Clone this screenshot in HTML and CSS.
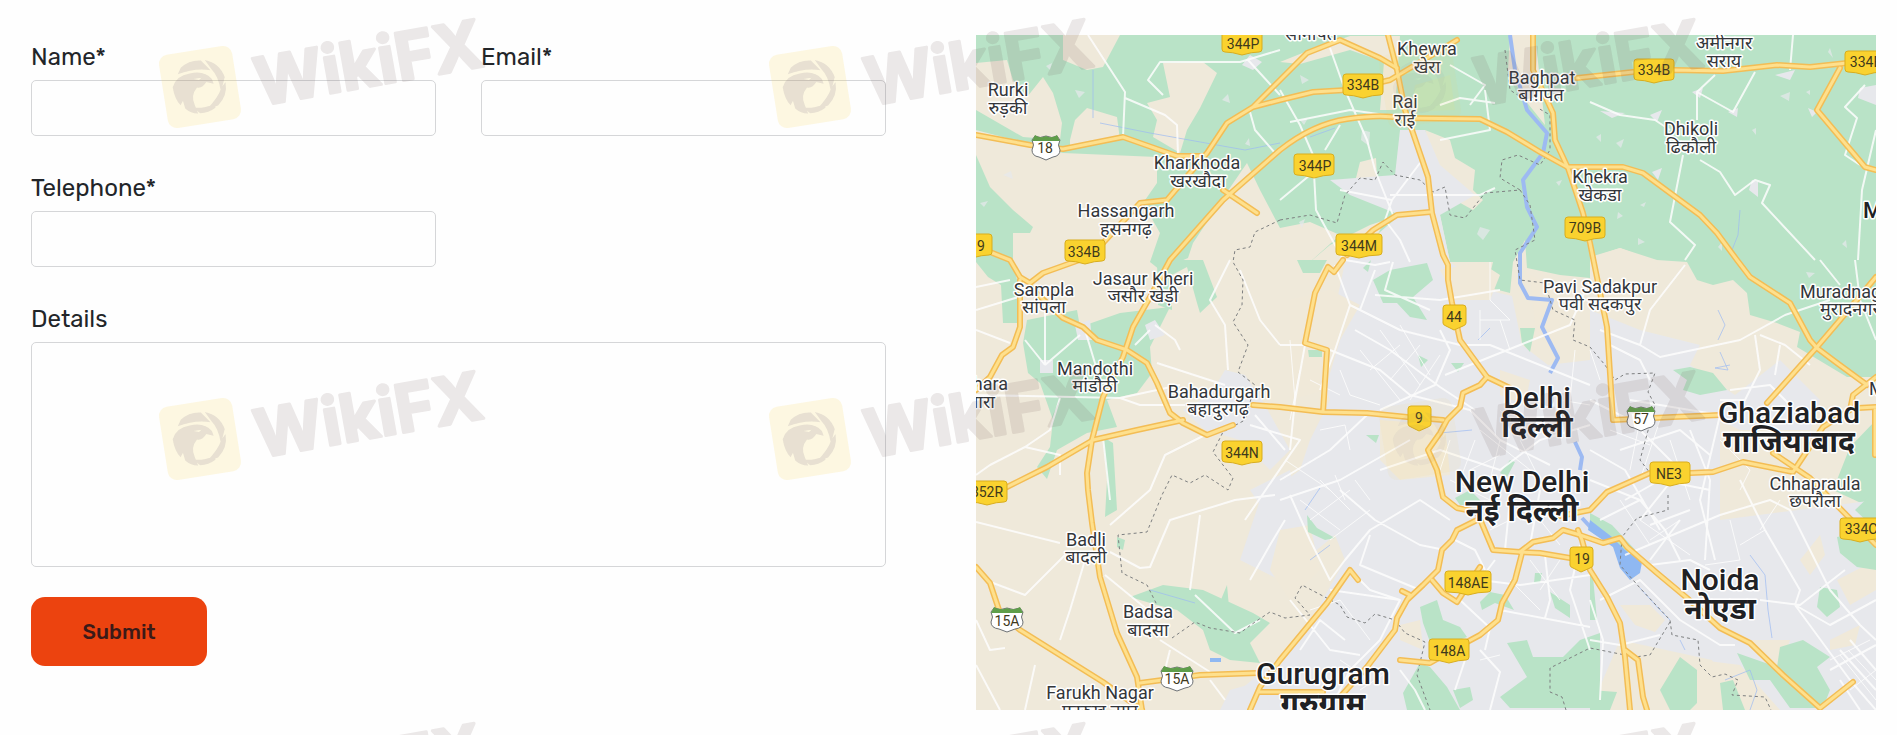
FILE: index.html
```html
<!DOCTYPE html>
<html lang="en">
<head>
  <meta charset="UTF-8">
  <meta name="viewport" content="width=device-width, initial-scale=1.0">
  <title>Contact</title>
  <link rel="stylesheet" href="styles.css">
</head>
<body>
  <main class="contact">
    <form class="contact-form">
      <div class="field">
        <label for="name">Name*</label>
        <input type="text" id="name" name="name" required>
      </div>
      <div class="field">
        <label for="email">Email*</label>
        <input type="email" id="email" name="email" required>
      </div>
      <div class="field">
        <label for="telephone">Telephone*</label>
        <input type="tel" id="telephone" name="telephone" required>
      </div>
      <div class="field field-wide">
        <label for="details">Details</label>
        <textarea id="details" name="details"></textarea>
      </div>
      <button type="submit" class="submit">Submit</button>
    </form>

    <svg class="map" viewBox="976 35 900 675" role="img" aria-label="Map of Delhi">
      <defs>
        <path id="sign" d="M3 0H37Q40 0 40 3V18Q40 21 37 21Q30 21 20 24Q10 21 3 21Q0 21 0 18V3Q0 0 3 0Z"/>
        <path id="sign-wide" d="M3 0H43Q46 0 46 3V18Q46 21 43 21Q33 21 23 24Q13 21 3 21Q0 21 0 18V3Q0 0 3 0Z"/>
        <path id="badge" d="M3 0H20Q23 0 23 3V18Q23 20 20 21L11 25L3 21Q0 20 0 18V3Q0 0 3 0Z"/>
        <g id="shield">
          <path class="shield-body" d="M3 1Q8 4 14 1Q20 4 25 1L28 5Q25 10 28 15Q28 21 21 22L14 25L7 22Q0 21 0 15Q3 10 0 5Z"/>
          <path class="shield-top" d="M3 0Q8 4 14 1Q20 4 25 0L28 6H0Z"/>
        </g>
        <g id="shield-wide">
          <path class="shield-body" d="M3 1Q10 4 16 1Q22 4 29 1L32 5Q29 10 32 15Q32 21 24 22L16 25L8 22Q0 21 0 15Q3 10 0 5Z"/>
          <path class="shield-top" d="M3 0Q10 4 16 1Q22 4 29 0L32 6H0Z"/>
        </g>

        <!-- highways, drawn twice: casing and fill -->
        <g id="highways">
          <path d="M1142 710L1137 677L1117 633L1100 577L1092 523L1088 490L1087 473L1092 440L1103 397L1123 357L1133 327L1150 297L1170 260L1223 200L1280 150Q1313 124 1347 119T1400 118L1480 119L1507 132L1540 152L1567 167L1623 167L1643 173L1700 215L1717 233L1737 260L1750 277L1790 303L1810 340L1817 348L1837 363L1867 385"/>
          <path d="M1388 35L1397 70L1405 110L1413 133L1428 177L1432 213L1443 255L1448 265V280L1452 303L1460 340L1487 377L1510 388"/>
          <path d="M1487 377L1480 385L1463 393L1460 407L1447 420L1440 433L1428 450L1437 470L1443 497L1457 508L1477 512L1493 550L1520 552L1540 553L1570 558H1590"/>
          <path d="M1477 520L1457 530L1452 540L1442 550L1438 570L1423 585L1407 600L1397 618L1395 630L1367 667L1340 697M1402 591L1410 595L1407 600"/>
          <path d="M1432 580L1443 593L1457 602L1480 567M1522 553L1515 580L1502 603L1498 620L1480 635L1467 642L1430 663L1400 660"/>
          <path d="M1520 552L1533 542L1553 538L1563 530L1580 535L1603 543L1620 538L1627 547L1657 573L1687 598L1720 628L1750 643L1783 675L1820 708L1853 682"/>
          <path d="M1578 530L1582 540L1590 570L1607 597L1620 623L1625 657L1630 710M1625 650L1638 660L1643 697L1647 710"/>
          <path d="M1560 516L1590 510L1607 492L1650 473H1690L1713 472L1743 462L1793 472L1823 427L1850 410L1853 395L1876 377M1773 453L1810 478L1876 545"/>
          <path d="M1767 403L1817 347L1840 320L1876 277M1858 408L1876 407M1875 410V455"/>
          <path d="M1533 35V70L1553 113L1555 140L1568 168L1583 213L1590 243L1607 327L1613 420L1673 417L1720 415"/>
          <path d="M1253 405L1280 407L1323 412L1367 413L1407 417L1443 420M1343 260L1334 272L1328 267L1315 293L1305 343L1327 350L1323 412M1347 255L1373 230L1397 215L1430 212"/>
          <path d="M1103 243L1140 203L1167 200L1207 153L1227 123L1253 107L1280 80L1307 53L1340 40L1380 58L1397 68M1253 107L1280 100L1313 92L1347 90L1390 80L1457 40"/>
          <path d="M976 135L1030 145L1063 149L1123 137L1177 156H1203M1223 190L1257 213"/>
          <path d="M985 250L1010 260L1020 277L1030 283L1043 273L1085 258M1020 280V327L1013 347L1002 355L990 377L976 390M1030 287L1063 318L1083 327L1097 340L1127 350L1147 363L1157 383L1170 413L1183 423L1207 435L1233 425"/>
          <path d="M976 495L1007 487L1047 467L1093 440L1137 430L1183 420M976 567L990 583L1000 613L1020 630L1103 682L1142 710M1140 683L1200 675L1257 673"/>
          <path d="M1250 710L1260 687L1280 660L1327 603L1350 570L1358 580M1260 692H1323"/>
          <path d="M1577 78L1633 72L1673 70L1723 71L1777 65L1810 67L1847 63M1840 68L1817 110L1865 167L1876 170"/>
        </g>
      </defs>

      <rect class="land" x="976" y="35" width="900" height="675"/>

      <!-- fields -->
      <path class="green" d="M976 35H1876V377H1847L1797 347L1800 332L1777 323L1750 315L1747 293L1733 280L1713 285L1697 280L1687 262L1657 260L1620 248L1590 257V278L1560 275L1527 268L1525 240L1513 262L1510 293L1487 287L1493 262L1450 262L1440 215L1400 215L1375 240L1360 262H1310L1340 235L1310 222L1280 228L1260 190L1247 163L1225 195L1193 243L1188 258L1160 270L1150 262L1160 233L1143 203L1157 183V157L1063 153L976 130Z"/>
      <path class="green" d="M976 155L990 187L1013 210L1033 227L1030 233H1013V260L1017 280L1020 323H1003L1001 285L988 277L976 262ZM1027 320L1077 310L1080 327L1120 313L1170 307L1157 333L1150 347L1152 373L1137 393L1107 400L1117 427L1087 433L1057 450L1047 479L1037 467L1050 447L1053 420L1040 383L1028 373L1023 343ZM1103 437L1113 443L1117 510L1105 517L1107 480ZM1157 260H1203L1217 297L1200 313L1197 303L1187 267L1172 275V310L1158 305Z"/>
      <path class="green" d="M1130 597L1163 585L1203 590L1253 613L1270 623L1250 643L1260 663L1230 660L1210 650L1203 630L1177 610L1157 605ZM1218 607L1227 585L1229 607L1225 620ZM1117 537L1125 540L1123 550L1117 547ZM1876 420L1850 447L1833 490L1876 510Z"/>

      <path class="land" d="M1023 137L976 110V63L1007 60L1013 80L1027 97L1043 77L1053 93L1062 123L1060 140ZM1063 35H1120L1103 67L1087 70L1063 60ZM1163 63L1203 62L1217 73L1200 108L1187 130L1180 153L1153 137L1157 120L1147 103L1170 97ZM1070 140L1075 120L1087 108L1117 117L1120 140L1070 147ZM1280 62L1310 50L1350 36H1400L1395 110H1380L1384 62L1350 50L1300 64ZM1510 35H1535L1545 125L1525 100L1508 70Z"/>
      <path class="land" d="M1360 162L1376 158L1377 178L1355 182ZM1425 130L1450 140L1455 158L1475 170L1473 190L1483 200L1473 210L1455 200L1440 185ZM1590 258L1620 248L1657 262L1660 290H1590ZM1330 245L1370 225L1385 220L1375 240L1350 262H1310Z"/>

      <!-- built-up areas -->
      <path class="urban" d="M1400 130L1425 130L1440 165L1475 195L1440 215L1450 262L1487 290L1512 296L1522 345L1548 365L1590 360L1590 310L1640 330L1700 345L1690 365L1735 395L1780 360L1820 400L1810 430H1720V520L1876 500V710H1735L1712 660L1620 640L1590 710H1260L1240 690L1300 640L1345 560L1335 535L1280 580L1240 560L1260 500L1300 470L1310 440L1330 400L1310 350L1335 310L1345 262L1400 215L1350 195L1330 180L1395 175Z"/>
      <path class="urban" d="M1183 410L1210 395L1225 370L1245 375L1262 400L1290 450L1270 470L1240 440L1205 430ZM1145 325L1155 320L1165 335L1150 340ZM1250 490L1290 470L1300 520L1270 520ZM1075 325L1090 320L1092 340H1078ZM1040 360H1053V373H1040ZM1230 690L1265 680L1270 710H1220ZM1250 55L1262 62L1253 70L1242 65ZM1860 88L1876 85V105L1858 98ZM1775 75L1795 70L1790 80ZM1600 111L1625 113L1612 118ZM1650 115L1662 110L1657 122ZM1692 92L1703 88L1700 98ZM1728 112L1738 108L1737 117ZM1752 180L1758 182V197L1749 190ZM1652 172L1662 168L1658 180ZM1808 108L1817 112L1812 117Z"/>
      <path class="speck" d="M1616 143l8-4-3 9zM1596 137l5-3v8zM1780 96l10-4-1 9zM1638 238l7 4-7 3zM1752 130l4-2v7zM1806 92l4-2v5zM1830 48l3 10-5-6zM1842 244l4-4 1 8zM1618 212l5 4-6 3zM1640 205l6-3-2 5zM1718 247l4-5v9zM1300 75l9 5-7 4zM1222 100l6-6 2 9zM1075 90l10 2-6 6zM1046 66l6-3-2 7zM1245 144l4-6 1 8zM1556 182l6-2-3 6zM1480 227l10 3-7 10-6-6zM1300 120l8-2-4 7zM1362 130l8 2-1 14-8-6zM1299 222l6-3-3 9zM980 203l8-2-4 6zM1003 175l8-4 2 8zM1815 273l-6 5-3-6z"/>
      <path class="sand" d="M1290 300L1330 290L1360 305L1340 340L1325 390L1290 400ZM1500 370L1530 380L1525 405L1500 395ZM1380 420L1445 425L1450 475L1400 480L1380 460ZM1620 605L1650 605L1665 620L1655 632L1635 625ZM1800 560L1820 535L1825 555L1810 575ZM1837 580L1876 560V590L1850 605ZM1830 640L1860 625L1855 645L1830 650ZM1400 625L1420 620L1423 650L1400 640ZM1700 660L1740 665L1780 710H1690ZM1750 640L1790 640L1780 670ZM1720 420L1760 440L1790 430L1780 455L1720 460ZM1530 275L1550 285L1565 310L1550 350L1535 325ZM1440 270L1480 262L1500 275L1490 300H1455ZM1280 530L1310 525L1320 570L1290 600L1270 570Z"/>

      <!-- parks -->
      <path class="green" d="M1507 643L1527 640L1533 657H1563L1580 640L1600 633V708H1510L1500 697L1527 677ZM1420 607L1437 600L1443 620L1460 627L1467 637L1433 650L1423 623ZM1420 663L1430 667L1447 687L1460 710H1407L1403 693ZM1453 690L1470 687L1473 700L1460 708ZM1660 690L1680 657L1697 670V703L1690 710H1670ZM1737 653L1777 667L1780 647L1803 640L1830 657L1817 667L1830 690L1823 708H1790L1770 680H1750ZM1720 683L1733 680L1745 710H1723ZM1590 690L1617 692L1610 710H1590ZM1837 537L1876 530V570L1857 567L1840 553ZM1820 587L1837 590L1840 607L1827 617L1817 607ZM1855 510L1876 490V530Z"/>
      <path class="green" d="M1673 370L1690 367L1713 373L1727 390L1700 395L1683 390L1687 380ZM1373 280L1390 270L1427 263L1433 280L1413 297L1427 320L1410 317L1397 303H1383ZM1297 260H1327L1320 273H1303ZM1520 328H1535L1530 352L1522 343ZM1308 350H1322V357H1309ZM1418 355L1428 360L1421 367ZM1451 363H1464L1458 372ZM1366 435H1379L1376 443ZM1510 460L1515 462L1507 477L1500 473ZM1480 602L1490 592L1505 595L1514 610L1495 603L1482 610ZM1535 573H1542L1540 583H1534ZM1550 592L1570 605V618L1555 608ZM1307 515L1317 528L1335 538L1325 540L1308 532ZM1590 513L1612 525L1640 555L1635 570L1612 545L1590 530ZM1455 498L1470 490L1485 505H1460ZM1590 545L1597 620H1590ZM1363 268L1371 260L1368 272Z"/>
      <path class="farm" d="M1415 85L1450 75L1455 110L1410 112Z"/>

      <!-- water -->
      <path class="river" d="M1510 35L1515 70L1527 110L1547 133L1543 153L1523 180L1527 207L1537 227L1520 253L1520 283L1528 298L1552 300L1542 327L1558 358L1550 373M1575 442L1582 457L1580 470M1582 518L1595 532L1610 540"/>
      <path class="lake" d="M1590 520L1612 537L1625 550L1642 562L1640 573L1630 580L1620 568L1613 547L1588 530ZM1210 658h11v4h-11z"/>
      <path class="stream" d="M1093 70V118M1100 123L1150 133L1245 150L1280 143M1310 137L1335 128M1478 340L1490 328M1720 352L1728 370L1715 368L1730 365M1718 310L1725 325L1718 340M1740 210L1738 235L1732 250M1640 588L1660 610L1670 620M1680 640L1685 650M1725 680L1750 670L1757 690L1750 710M1750 555L1765 575L1768 610L1772 638M1150 590L1195 603M1305 510L1320 488M1440 433L1472 430M1310 560L1330 545"/>

      <!-- local roads -->
      <path class="road" d="M1088 35L1125 92L1123 137M1125 98L1165 115L1177 125L1178 155M1163 95L1148 80L1160 62L1240 62L1280 50M1248 60L1280 95M1250 112L1255 130L1275 153M1280 90L1300 125L1313 155L1316 210L1335 245L1345 262M1290 122L1350 110L1385 115M1340 125L1325 150M1330 48L1345 90L1367 140L1375 170L1393 215M1280 200L1310 175M1340 190L1392 200L1420 163M1392 200L1385 220L1400 240L1410 262M1390 195H1480L1495 188M1440 105L1460 98L1495 103M1450 65L1485 85L1470 105M1485 90L1490 130L1440 140M1590 102L1620 115L1655 120L1670 130M1715 75L1697 92V120M1697 92L1733 112L1755 72M1793 35L1790 70M1683 155L1670 222L1695 245L1685 260M1700 160L1720 172L1735 195L1755 180L1770 185L1762 203L1815 260M1865 85L1845 107L1857 118L1845 155L1860 165M1876 130L1862 190L1858 260"/>
      <path class="road" d="M976 287L1010 280M976 330L1010 343M976 310L1025 295M1045 287V365M1045 365L1025 340M1045 365L1080 335M976 395L1120 398L1140 405L1185 405M1120 398L1180 385M1085 330L1100 380M1060 398L1050 430L1025 447L990 465L976 475M1025 447L1060 455V475M1103 437L1110 500M1150 330L1135 345M1155 325L1175 340L1180 350M1157 363L1225 385M1230 260L1210 300L1225 325L1228 370M1240 270L1260 320L1280 345M1205 435L1165 455L1150 490L1110 525M976 522L1060 543M1065 555L1025 595L985 580M1085 560L1070 610L1060 640M1105 575L1160 620M1110 552L1140 568L1150 567L1170 520L1235 500L1275 495M1200 515L1190 590M1250 580L1270 545L1285 520M1160 640L1210 672M1170 650L1165 670M976 620L990 650L1005 648M1025 710L1035 665M976 665L1000 710M1210 680L1225 700M1195 595L1235 633L1260 620M1250 425L1300 440L1245 520M1255 415L1285 450"/>
      <path class="road" d="M1280 345L1305 345L1295 400L1290 450M1335 265L1350 305L1400 330L1460 345L1490 345L1540 365L1590 385M1350 305L1335 350L1320 390M1375 270L1360 310M1375 295L1440 300L1500 290M1393 262L1385 290L1430 310M1330 350L1380 370L1410 395L1470 410L1500 440L1550 465M1355 330L1390 350L1440 387L1475 410M1440 330L1450 350L1435 385L1380 410M1445 375L1520 345L1570 325L1590 280M1345 260L1375 265L1390 262M1280 480L1330 450L1367 415M1380 470L1440 450L1500 470L1540 440L1590 425M1280 500L1340 480L1410 440M1290 495L1310 540L1330 580L1345 560L1370 530L1420 500L1450 520M1340 490L1375 520L1420 545L1445 550M1370 535L1360 565L1420 590M1350 570L1370 590L1400 600M1330 590L1400 600L1380 640L1350 670L1330 710M1290 600L1330 650L1360 655M1300 650L1320 620L1345 640M1460 600L1490 628L1485 650M1500 610L1590 627M1495 560L1480 580L1520 585L1590 575M1545 555L1550 600L1545 618M1580 545L1570 590L1590 650M1455 540L1475 550L1485 570M1510 500L1505 550M1540 490L1530 545M1480 650L1500 672L1490 710M1400 670L1415 690L1425 710M1465 660L1455 690"/>
      <path class="road" d="M1600 330L1640 345L1660 357L1740 340L1785 315L1830 300M1640 345L1650 310L1685 265M1610 345L1640 360L1650 380M1760 335L1785 345L1810 365M1755 335L1760 370L1745 400L1720 400M1730 390L1770 385L1790 405M1780 345L1775 375M1630 400L1720 415L1700 500L1715 560M1590 400L1630 420L1680 470L1640 520M1590 450L1625 470L1660 530M1620 450L1680 430L1710 455M1690 430L1710 480L1705 560M1625 555L1720 515L1770 500L1790 510L1830 590L1860 625L1876 640M1740 480L1765 530L1800 590L1795 605L1850 680L1876 710M1795 605L1830 625L1876 600M1760 600L1800 605L1845 570M1650 565L1690 560L1710 570M1640 500L1665 530L1680 560M1680 520L1650 560M1650 525L1690 510M1600 600L1640 580L1680 620L1720 645H1735M1590 640L1620 645L1660 635M1625 500L1660 480L1710 490M1590 480L1640 500L1600 520M1590 600L1603 640L1600 700M1876 340L1860 300L1855 260M1820 260L1840 285M1840 650L1876 690M1830 670L1876 645M1850 640L1876 670M1840 680L1860 710"/>
      <path class="street" d="M1380 330L1420 385M1400 325L1430 375M1360 350L1400 400M1390 380L1420 345M1370 370L1400 345M1410 400L1440 355M1340 370L1350 395L1380 405M1295 400L1290 340M1320 430L1345 425L1350 450M1300 500L1340 530M1320 480L1350 510M1310 520L1350 490M1330 540L1370 510M1345 500L1335 475M1355 480L1370 500M1285 460L1330 490M1450 440L1440 470M1475 440L1460 480M1500 440L1490 480M1520 440L1540 480M1480 430L1530 470M1450 480L1490 500M1470 470L1500 455M1500 410L1520 430M1530 560L1560 600M1510 580L1540 610M1560 560L1540 590M1490 530L1520 515M1520 520L1550 510M1540 520L1560 545M1310 610L1340 600L1370 640M1340 660L1370 680M1360 690L1390 670M1480 660L1500 655M1610 430L1650 445M1640 420L1630 470M1660 420L1640 480M1670 440L1690 500M1640 520L1690 555M1650 540L1680 520M1620 500L1650 545M1720 440L1750 470L1740 490M1780 500L1760 530M1730 520L1740 560L1705 565M1840 655L1876 700M1848 650L1876 680M1830 660L1870 640M1850 690L1876 670M1765 530L1740 545M1310 380L1340 395M1300 370L1290 420M1590 350L1600 380M1575 350L1570 400M1560 400L1590 405M1480 310V340M1500 320L1510 350M1480 320H1510M1490 262V300L1510 320"/>

      <!-- state borders -->
      <path class="border" d="M1280 220L1310 215L1337 223L1345 195L1360 178L1375 180L1383 162L1395 175L1420 180L1433 192L1445 187L1450 215L1465 218L1485 193L1520 190L1500 178L1502 160L1518 155L1540 165L1550 150V115L1538 108M1505 50L1510 90L1525 100M1520 190L1530 205L1535 240L1515 250L1520 280L1545 283L1553 310L1575 320L1573 340L1590 347L1605 365L1615 380L1625 374L1655 373L1648 392L1655 405L1640 460L1650 473M1668 495V510L1637 518L1622 537L1620 565L1640 588L1670 620L1672 635L1698 640L1700 665L1712 677L1725 674L1738 680L1732 695L1765 697L1771 710M1670 622L1650 655L1635 657L1590 648L1550 668V692L1562 697L1566 710"/>
      <path class="border" d="M1280 220L1255 232L1250 247L1235 250L1233 262L1243 280L1242 305L1233 322L1248 345L1238 372L1255 385L1245 420L1223 432L1213 452L1233 478L1228 490L1205 475L1190 483L1172 475L1162 495L1147 532L1118 535L1122 573L1147 585L1157 605M1172 638L1195 622L1210 628L1240 633L1255 622L1270 612L1285 618L1310 615L1295 598L1302 585L1340 605L1347 617L1365 623L1375 614L1395 620L1405 633L1425 642L1417 675L1430 710"/>

      <use href="#highways" class="highway-casing"/>
      <use href="#highways" class="highway-fill"/>

      <!-- road numbers -->
      <g class="signs">
        <use href="#sign" x="1222" y="31"/><text x="1243" y="49">344P</text>
        <use href="#sign" x="1343" y="74"/><text x="1363" y="90">334B</text>
        <use href="#sign" x="1634" y="59"/><text x="1654" y="75">334B</text>
        <use href="#sign" x="1845" y="51"/><text x="1866" y="67">334B</text>
        <use href="#sign" x="1294" y="154"/><text x="1315" y="171">344P</text>
        <use href="#sign-wide" x="1336" y="234"/><text x="1359" y="251">344M</text>
        <use href="#sign" x="1065" y="240"/><text x="1084" y="257">334B</text>
        <use href="#sign" x="952" y="234"/><text x="981" y="251">9</text>
        <use href="#sign" x="1565" y="217"/><text x="1585" y="233">709B</text>
        <use href="#sign" x="1222" y="441"/><text x="1242" y="458">344N</text>
        <use href="#sign" x="967" y="481"/><text x="987" y="497">352R</text>
        <use href="#sign" x="1650" y="462"/><text x="1669" y="479">NE3</text>
        <use href="#sign-wide" x="1445" y="571"/><text x="1468" y="588">148AE</text>
        <use href="#sign" x="1429" y="639"/><text x="1449" y="656">148A</text>
        <use href="#sign" x="1840" y="518"/><text x="1861" y="534">334C</text>
        <use href="#badge" x="1443" y="305"/><text x="1454" y="322">44</text>
        <use href="#badge" x="1408" y="406"/><text x="1419" y="423">9</text>
        <use href="#badge" x="1570" y="547"/><text x="1582" y="564">19</text>
        <use href="#shield" x="1032" y="135"/><text x="1045" y="153">18</text>
        <use href="#shield" x="1627" y="406"/><text x="1641" y="424">57</text>
        <use href="#shield-wide" x="991" y="607"/><text x="1007" y="626">15A</text>
        <use href="#shield-wide" x="1161" y="666"/><text x="1177" y="684">15A</text>
      </g>

      <g class="places">
        <text x="1008" y="96">Rurki</text><text x="1008" y="114">रुड़की</text>
        <text x="1197" y="169">Kharkhoda</text><text x="1198" y="187">खरखौदा</text>
        <text x="1126" y="217">Hassangarh</text><text x="1126" y="235">हसनगढ़</text>
        <text x="1427" y="55">Khewra</text><text x="1427" y="73">खेरा</text>
        <text x="1311" y="40">सोनीपत</text>
        <text x="1405" y="108">Rai</text><text x="1405" y="126">राई</text>
        <text x="1542" y="84">Baghpat</text><text x="1541" y="101">बाग़पत</text>
        <text x="1724" y="49">अमीनगर</text><text x="1724" y="67">सराय</text>
        <text x="1691" y="135">Dhikoli</text><text x="1691" y="153">ढिकौली</text>
        <text x="1600" y="183">Khekra</text><text x="1600" y="201">खेकडा</text>
        <text x="1600" y="293">Pavi Sadakpur</text><text x="1600" y="310">पवी सदकपुर</text>
        <text x="1044" y="296">Sampla</text><text x="1044" y="313">सांपला</text>
        <text x="1143" y="285">Jasaur Kheri</text><text x="1143" y="302">जसौर खेड़ी</text>
        <text x="1095" y="375">Mandothi</text><text x="1095" y="392">मांडौठी</text>
        <text x="1219" y="398">Bahadurgarh</text><text x="1218" y="415">बहादुरगढ़</text>
        <text x="1086" y="546">Badli</text><text x="1086" y="563">बादली</text>
        <text x="1148" y="618">Badsa</text><text x="1148" y="636">बादसा</text>
        <text x="1100" y="699">Farukh Nagar</text><text x="1100" y="717">फारुख नगर</text>
        <text x="1815" y="490">Chhapraula</text><text x="1815" y="507">छपरौला</text>
        <g class="from-left">
          <text x="1800" y="298">Muradnagar</text><text x="1820" y="315">मुरादनगर</text>
          <text x="1869" y="395">Modinagar</text>
        </g>
        <g class="from-right">
          <text x="1008" y="390">Jhara</text><text x="995" y="408">झारा</text>
        </g>
      </g>

      <g class="cities">
        <text x="1537" y="408">Delhi</text><text class="hindi" x="1537" y="437">दिल्ली</text>
        <text x="1522" y="492">New Delhi</text><text class="hindi" x="1522" y="521">नई दिल्ली</text>
        <text x="1789" y="423">Ghaziabad</text><text class="hindi" x="1789" y="452">गाजियाबाद</text>
        <text x="1720" y="590">Noida</text><text class="hindi" x="1720" y="619">नोएडा</text>
        <text x="1323" y="684">Gurugram</text><text class="hindi" x="1323" y="714">गुरुग्राम</text>
        <text class="town" x="1863" y="218">Meerut</text>
      </g>
    </svg>
  </main>

  <svg class="watermark" aria-hidden="true">
    <defs>
      <g id="mark-logo" transform="rotate(-9 40 40)">
        <rect class="mark-tile" x="3" y="3" width="74" height="74" rx="9"/>
        <path class="mark-bird" d="M24 18A27 27 0 0 1 45 14L53 25Q38 20 20 24ZM49 14A27 27 0 0 1 66 34L60 48Q60 32 54 24ZM66 39A27 27 0 0 1 55 61L43 63Q56 54 61 44ZM52 63A27 27 0 0 1 36 66L30 59Q38 62 52 59ZM13 36Q18 25 32 25Q47 24 53 34L54 39L47 36Q42 42 37 40Q29 47 32 57L34 66Q27 65 22 59L21 51L18 55Q13 48 13 36ZM35 31L40 33L43 31Z"/>
      </g>
      <g id="mark">
        <use href="#mark-logo"/>
        <text class="mark-text" x="99" y="59" transform="rotate(-10 99 59)">WikiFX</text>
      </g>
      <g id="mark-faint">
        <use href="#mark-logo" class="mark-dim"/>
        <text class="mark-text" x="99" y="59" transform="rotate(-10 99 59)">WikiFX</text>
      </g>
    </defs>
    <use href="#mark" x="160" y="47"/>
    <use href="#mark" x="770" y="47"/>
    <use href="#mark-faint" x="1380" y="47"/>
    <use href="#mark" x="160" y="399"/>
    <use href="#mark" x="770" y="399"/>
    <use href="#mark-faint" x="1380" y="399"/>
    <use href="#mark" x="160" y="751"/>
    <use href="#mark" x="770" y="751"/>
    <use href="#mark" x="1380" y="751"/>
  </svg>
</body>
</html>
```

FILE: styles.css
```css
* {
  box-sizing: border-box;
}

body {
  margin: 0;
  background: #fefefe;
  color: #222529;
  font-family: Rubik, Roboto, sans-serif;
}

.contact {
  display: grid;
  grid-template-columns: 855fr 900fr;
  align-items: start;
  gap: 90px;
  padding: 35px 21px 25px 31px;
}

.contact-form {
  display: grid;
  grid-template-columns: 1fr 1fr;
  gap: 34px 45px;
  padding-top: 4px;
}

.field {
  display: flex;
  flex-direction: column;
}

.field-wide {
  grid-column: 1 / -1;
}

.field label {
  margin-bottom: 5px;
  font-size: 24px;
  line-height: 36px;
}

.field input,
.field textarea {
  width: 100%;
  height: 56px;
  padding: 8px 16px;
  border: 1px solid #d5d6d8;
  border-radius: 5px;
  background: transparent;
  color: inherit;
  font: inherit;
  font-size: 20px;
}

.field textarea {
  height: 225px;
  resize: none;
}

.field input:focus,
.field textarea:focus {
  border-color: #ec430f;
  outline: none;
}

.submit {
  justify-self: start;
  width: 176px;
  height: 69px;
  margin-top: -4px;
  border: none;
  border-radius: 14px;
  background: #ec430f;
  color: #3b1a18;
  font-family: inherit;
  font-size: 21px;
  font-weight: 500;
  cursor: pointer;
}

.submit:hover {
  background: #d43a0a;
}

/* map */
.map {
  display: block;
  width: 100%;
  height: auto;
  overflow: hidden;
  font-family: Roboto, "Noto Sans", sans-serif;
}

.land {
  fill: #efe9da;
}

.green {
  fill: #b9e3c7;
}

.farm {
  fill: #bfe3bc;
}

.urban,
.speck {
  fill: #e7e8ec;
}

.speck {
  opacity: 0.7;
}

.sand {
  fill: #f0e9d9;
}

.lake {
  fill: #8fb8f2;
}

.river,
.stream {
  fill: none;
  stroke: #9dbaf2;
  stroke-width: 4;
  stroke-linejoin: round;
}

.stream {
  stroke-width: 1;
  opacity: 0.7;
}

.road,
.street {
  fill: none;
  stroke: #fdfdfd;
  stroke-width: 2;
  stroke-linejoin: round;
  opacity: 0.85;
}

.street {
  stroke-width: 1;
}

.border {
  fill: none;
  stroke: #7d7f80;
  stroke-width: 1;
  stroke-dasharray: 3 3;
}

.highway-casing,
.highway-fill {
  fill: none;
  stroke: #f3bd55;
  stroke-width: 6;
  stroke-linejoin: round;
  stroke-linecap: round;
}

.highway-fill {
  stroke: #fee08d;
  stroke-width: 3;
}

.signs {
  fill: #fad22f;
  stroke: #d9ad1d;
  stroke-width: 1;
}

.signs text {
  fill: #3f3a1c;
  stroke: none;
  font-size: 14px;
  font-weight: 400;
  text-anchor: middle;
}

.shield-body {
  fill: #fff;
  stroke: #6d7175;
}

.shield-top {
  fill: #5f9e4a;
  stroke: none;
}

.places text,
.cities text {
  fill: #33363a;
  stroke: #fff;
  stroke-width: 3;
  stroke-linejoin: round;
  paint-order: stroke;
  text-anchor: middle;
  font-size: 18px;
}

.places .from-left text {
  text-anchor: start;
}

.places .from-right text {
  text-anchor: end;
}

.cities text {
  fill: #202124;
  font-size: 30px;
  font-weight: 500;
}

.cities .hindi {
  font-weight: 700;
}

.cities .town {
  font-size: 22px;
  text-anchor: start;
}

/* watermark */
.watermark {
  position: fixed;
  inset: 0;
  width: 100%;
  height: 100%;
  pointer-events: none;
}

.mark-tile {
  fill: #fbd54a;
  opacity: 0.16;
}

.mark-bird {
  fill: #6e5f7a;
  opacity: 0.15;
}

.mark-dim {
  opacity: 0.4;
}

.mark-text {
  fill: #6e5555;
  stroke: #6e5555;
  stroke-width: 3;
  stroke-linejoin: round;
  opacity: 0.13;
  font-family: Inter, sans-serif;
  font-size: 66px;
  font-weight: 700;
}
```
